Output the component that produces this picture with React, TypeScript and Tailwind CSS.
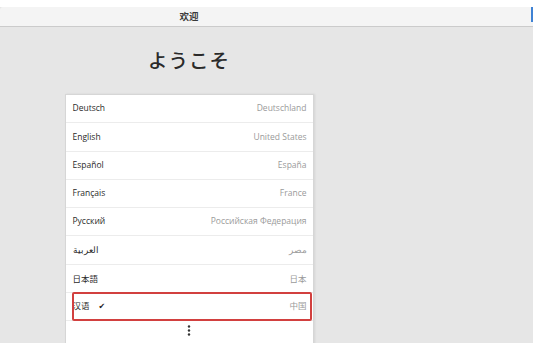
const languages = [
  { name: 'Deutsch', region: 'Deutschland' },
  { name: 'English', region: 'United States' },
  { name: 'Español', region: 'España' },
  { name: 'Français', region: 'France' },
  { name: 'Русский', region: 'Российская Федерация' },
  { name: 'العربية', region: 'مصر' },
  { name: '日本語', region: '日本' },
  { name: '汉语', region: '中国', selected: true },
];

export default function App() {
  return (
    <div
      className="w-[533px] h-[343px] overflow-hidden bg-[#e6e6e6] flex flex-col"
      style={{ fontFamily: '"Open Sans", "Noto Sans CJK SC", "Noto Sans", sans-serif' }}
    >
      {/* top strip */}
      <div className="h-[7px] bg-white shrink-0" />

      {/* header bar */}
      <div className="h-[20px] shrink-0 flex bg-[#f4f4f4] border-b border-[#cbcbcb] rounded-tl-[3px]">
        <div className="w-[378px] flex items-center justify-center pt-[1px] text-[9.5px] font-bold text-[#3a3a3a]">
          欢迎
        </div>
        <div className="flex-1" />
        <div className="w-[2px] h-[15px] bg-[#3f82d4]" />
      </div>

      {/* content column */}
      <div className="w-[378px] flex flex-col items-center">
        <h1
          className="mt-[19px] h-[28px] leading-[28px] text-[19.5px] font-medium text-[#2a2a2a] tracking-[1px]"
          style={{ fontFamily: '"Noto Sans CJK JP", sans-serif' }}
        >
          ようこそ
        </h1>

        <div className="mt-[20px] w-[249px] bg-white border border-[#d6d6d6] shadow-[1px_0_2px_rgba(0,0,0,0.08)]">
          {languages.map((l) => (
            <div
              key={l.name}
              className="relative h-[28.3px] flex items-center justify-between pl-[7px] pr-[6px] border-b border-[#ececec] text-[8.5px]"
            >
              <div className="flex items-center gap-[9px] text-[#2a2a2a]">
                <span style={l.name === '日本語' ? { fontFamily: '"Noto Sans CJK JP", sans-serif' } : undefined}>
                  {l.name}
                </span>
                {l.selected && (
                  <span className="text-[8px] text-[#222]" style={{ fontFamily: '"DejaVu Sans", sans-serif' }}>
                    ✔
                  </span>
                )}
              </div>
              <span
                className="text-[#9a9a9a]"
                style={l.region === '日本' ? { fontFamily: '"Noto Sans CJK JP", sans-serif' } : undefined}
              >
                {l.region}
              </span>
              {l.selected && (
                <div className="absolute top-[-1px] bottom-[-1px] left-[6px] right-[1px] border-2 border-[#d2403f] rounded-[2px]" />
              )}
            </div>
          ))}
          <div className="h-[24px] flex justify-center pt-[4px]">
            <svg width="4" height="12" viewBox="0 0 4 12">
              <circle cx="2" cy="1.5" r="1.2" fill="#333" />
              <circle cx="2" cy="5.5" r="1.2" fill="#333" />
              <circle cx="2" cy="9.5" r="1.2" fill="#333" />
            </svg>
          </div>
        </div>
      </div>
    </div>
  );
}
